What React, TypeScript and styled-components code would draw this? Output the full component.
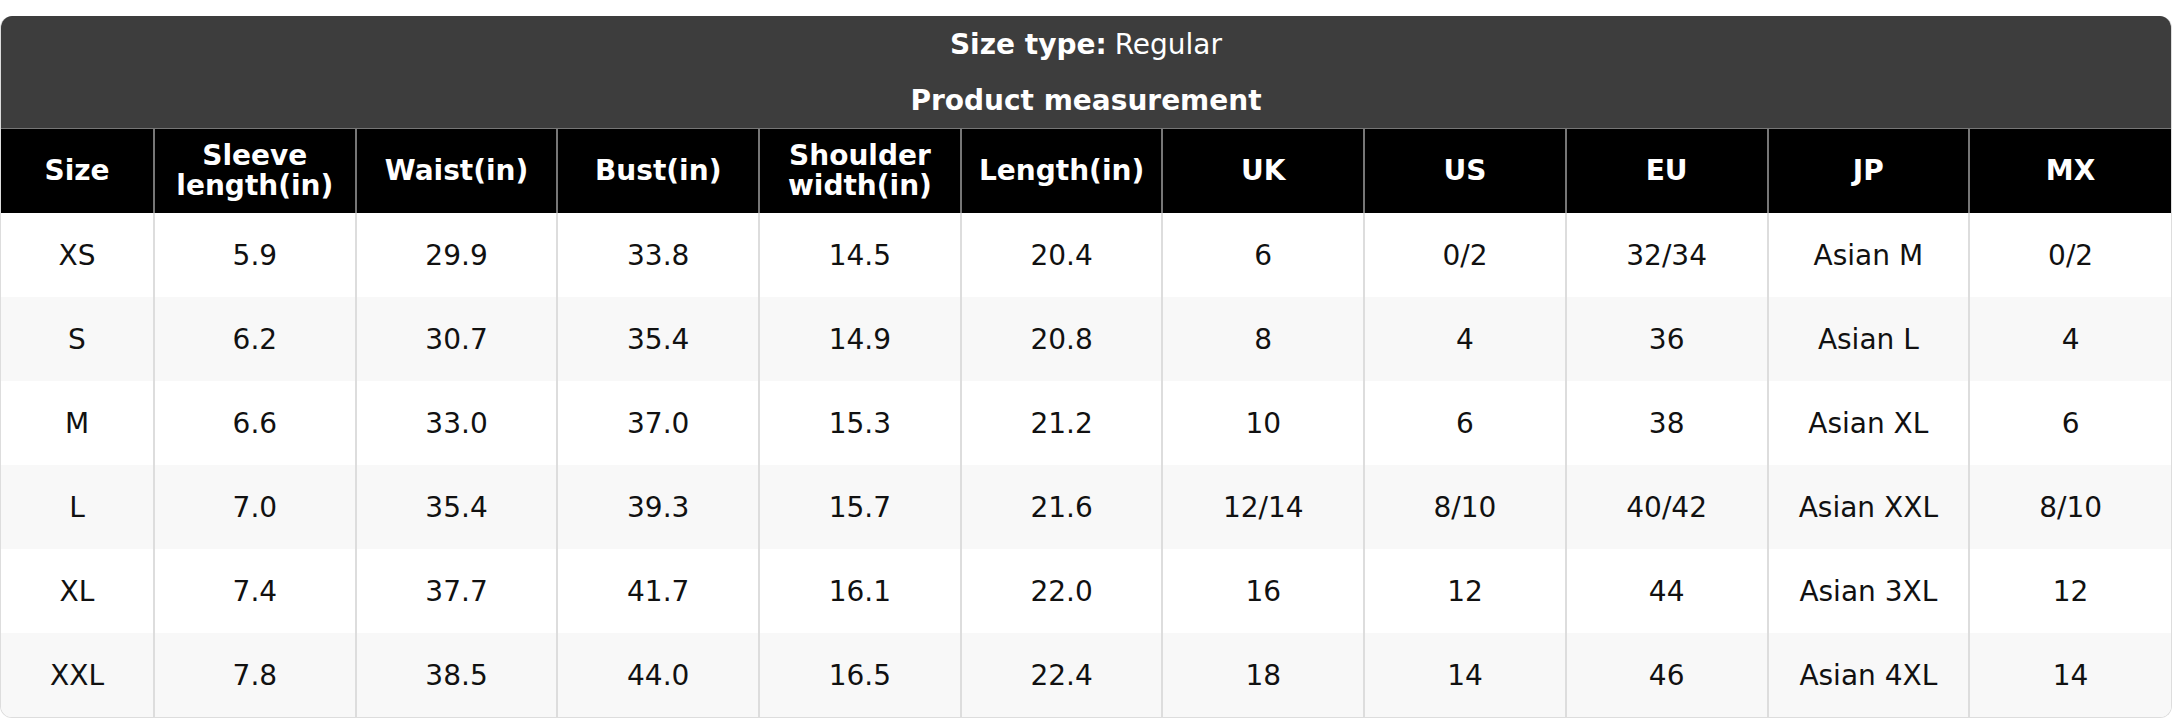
import React from "react";
import styled, { createGlobalStyle } from "styled-components";

const Global = createGlobalStyle`
  html, body { margin: 0; padding: 0; background: #ffffff; }
  body { font-family: "DejaVu Sans", "Liberation Sans", sans-serif; }
`;

const Card = styled.div`
  width: 2172px;
  margin-top: 16px;
  border: 1px solid #dddddd;
  border-top: none;
  border-radius: 12px;
  overflow: hidden;
  box-sizing: border-box;
  background: #ffffff;
`;

const TitleBar = styled.div`
  background: #3d3d3d;
  color: #ffffff;
  display: flex;
  flex-direction: column;
  border-bottom: 1px solid #767676;
`;

const TitleLine = styled.div<{ $bold?: boolean }>`
  height: 56px;
  display: flex;
  align-items: center;
  justify-content: center;
  font-size: 28px;
  font-weight: ${(p) => (p.$bold ? 700 : 400)};
`;

const Strong = styled.span`
  font-weight: 700;
  margin-right: 8px;
`;

const Table = styled.table`
  width: 100%;
  border-collapse: collapse;
  table-layout: fixed;
`;

const HeadCell = styled.th<{ $first?: boolean }>`
  background: #000000;
  color: #ffffff;
  font-size: 28px;
  font-weight: 700;
  line-height: 30px;
  height: 84px;
  padding: 0 12px;
  box-sizing: border-box;
  text-align: center;
  vertical-align: middle;
  border-left: ${(p) => (p.$first ? "none" : "2px solid #767676")};
`;

const Row = styled.tr<{ $striped?: boolean }>`
  background: ${(p) => (p.$striped ? "#f8f8f8" : "#ffffff")};
`;

const Cell = styled.td<{ $first?: boolean }>`
  height: 84px;
  padding: 0 8px;
  box-sizing: border-box;
  font-size: 28px;
  color: #111111;
  text-align: center;
  vertical-align: middle;
  border-left: ${(p) => (p.$first ? "none" : "2px solid #dddddd")};
`;

const headers = [
  "Size",
  "Sleeve length(in)",
  "Waist(in)",
  "Bust(in)",
  "Shoulder width(in)",
  "Length(in)",
  "UK",
  "US",
  "EU",
  "JP",
  "MX",
];

const rows: string[][] = [
  ["XS", "5.9", "29.9", "33.8", "14.5", "20.4", "6", "0/2", "32/34", "Asian M", "0/2"],
  ["S", "6.2", "30.7", "35.4", "14.9", "20.8", "8", "4", "36", "Asian L", "4"],
  ["M", "6.6", "33.0", "37.0", "15.3", "21.2", "10", "6", "38", "Asian XL", "6"],
  ["L", "7.0", "35.4", "39.3", "15.7", "21.6", "12/14", "8/10", "40/42", "Asian XXL", "8/10"],
  ["XL", "7.4", "37.7", "41.7", "16.1", "22.0", "16", "12", "44", "Asian 3XL", "12"],
  ["XXL", "7.8", "38.5", "44.0", "16.5", "22.4", "18", "14", "46", "Asian 4XL", "14"],
];

export default function App() {
  return (
    <>
      <Global />
      <Card>
        <TitleBar>
          <TitleLine>
            <Strong>Size type:</Strong>Regular
          </TitleLine>
          <TitleLine $bold>Product measurement</TitleLine>
        </TitleBar>
        <Table>
          <colgroup>
            <col style={{ width: 153 }} />
            {headers.slice(1).map((h) => (
              <col key={h} />
            ))}
          </colgroup>
          <thead>
            <tr>
              {headers.map((h, i) => (
                <HeadCell key={h} $first={i === 0}>
                  {h}
                </HeadCell>
              ))}
            </tr>
          </thead>
          <tbody>
            {rows.map((r, ri) => (
              <Row key={r[0]} $striped={ri % 2 === 1}>
                {r.map((c, ci) => (
                  <Cell key={ci} $first={ci === 0}>
                    {c}
                  </Cell>
                ))}
              </Row>
            ))}
          </tbody>
        </Table>
      </Card>
    </>
  );
}
